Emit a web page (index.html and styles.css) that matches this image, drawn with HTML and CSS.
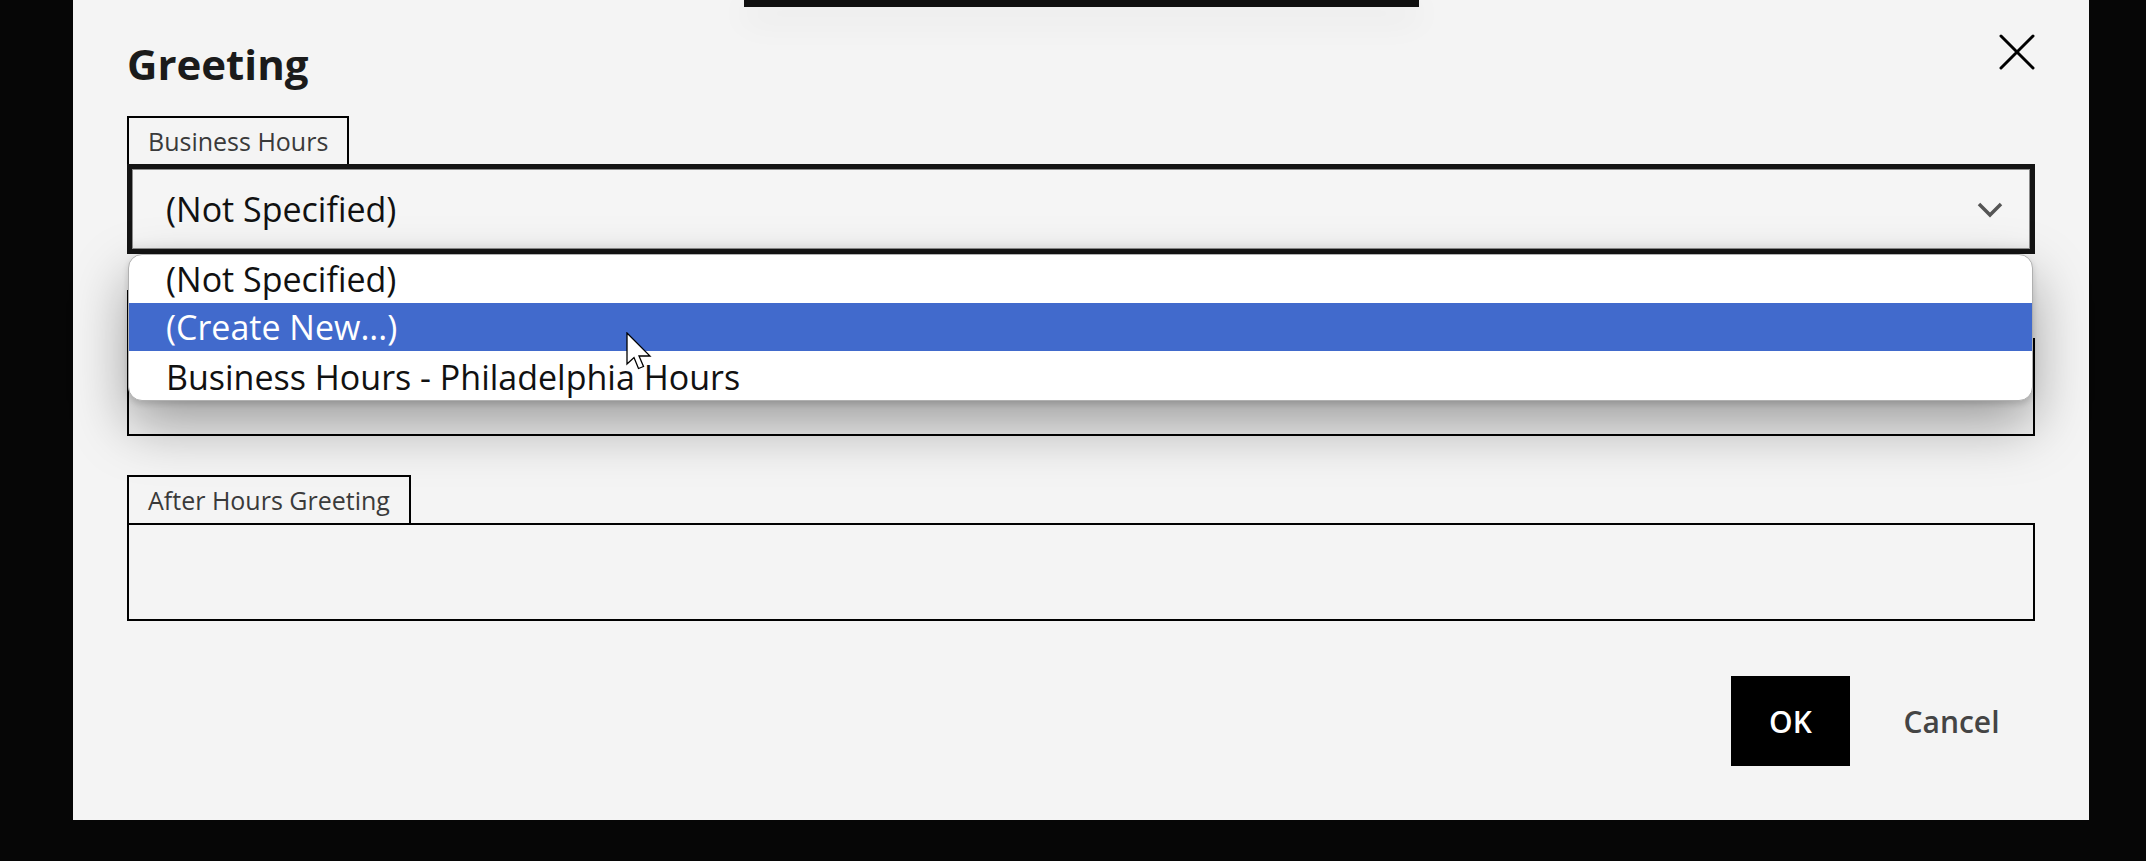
FILE: index.html
```html
<!DOCTYPE html>
<html lang="en">
<head>
<meta charset="utf-8">
<title>Greeting</title>
<link rel="stylesheet" href="styles.css">
</head>
<body>
<div class="screen">
  <div class="topbar"></div>
  <div class="dialog">
    <div class="dialog-header">
      <h1 class="title">Greeting</h1>
      <button class="close" aria-label="Close">
        <svg width="36" height="36" viewBox="0 0 36 36"><path d="M2 2 L34 34 M34 2 L2 34" stroke="#000" stroke-width="3" stroke-linecap="round" fill="none"/></svg>
      </button>
    </div>

    <div class="field">
      <div class="tab">Business Hours</div>
      <div class="select-wrap">
        <div class="select">
          <span>(Not Specified)</span>
          <svg class="chevron" width="26" height="17" viewBox="0 0 26 17"><path d="M2 3 L13 14 L24 3" stroke="#555" stroke-width="3.5" fill="none"/></svg>
        </div>
        <ul class="listbox">
          <li class="option">(Not Specified)</li>
          <li class="option active">(Create New...)</li>
          <li class="option option-last">Business Hours - Philadelphia Hours</li>
        </ul>
      </div>
    </div>

    <div class="field field-second">
      <div class="tab tab-hidden" aria-hidden="true"></div>
      <div class="box"></div>
    </div>

    <div class="field field-third">
      <div class="tab">After Hours Greeting</div>
      <div class="box"></div>
    </div>

    <div class="actions">
      <button class="btn btn-primary">OK</button>
      <button class="btn btn-secondary">Cancel</button>
    </div>
  </div>
  <svg class="cursor" width="26" height="38" viewBox="0 0 26 38"><path d="M1 1 L1 32 L8 25.5 L12.5 36.5 L17.5 34.5 L13 24 L24 24 Z" fill="#fff" stroke="#000" stroke-width="1.3" stroke-linejoin="miter"/></svg>
</div>
</body>
</html>
```

FILE: styles.css
```css
html, body {
  margin: 0;
  padding: 0;
}

body {
  width: 2146px;
  height: 861px;
  overflow: hidden;
  background: #060606;
  font-family: "Open Sans", "Noto Sans", sans-serif;
}

.screen {
  position: relative;
  height: 861px;
  padding-left: 73px;
  box-sizing: border-box;
}

.topbar {
  position: absolute;
  left: 744px;
  top: 0;
  width: 675px;
  height: 7px;
  background: #111;
  box-shadow: 0 10px 34px rgba(0, 0, 0, 0.12);
  z-index: 3;
}

.dialog {
  width: 2016px;
  height: 820px;
  background: #f4f4f4;
  padding: 0 54px;
  box-sizing: border-box;
  display: flex;
  flex-direction: column;
}

.dialog-header {
  display: flex;
  justify-content: space-between;
  align-items: flex-start;
  height: 116px;
  padding-top: 34px;
  box-sizing: border-box;
}

.title {
  margin: 5px 0 0;
  font-size: 42px;
  line-height: 50px;
  font-weight: 700;
  color: #1b1b1b;
}

.close {
  width: 36px;
  height: 36px;
  padding: 0;
  border: 0;
  background: none;
}

.close svg {
  display: block;
}

.field {
  display: flex;
  flex-direction: column;
  align-items: flex-start;
}

.field-second {
  margin-top: 36px;
}

.field-third {
  margin-top: 39px;
}

.tab {
  height: 48px;
  box-sizing: border-box;
  border: 2px solid #000;
  border-bottom: 0;
  padding: 0 19px;
  display: flex;
  align-items: center;
  font-size: 25px;
  color: #3a3a3a;
  background: #f4f4f4;
}

.tab-hidden {
  width: 330px;
}

.select-wrap {
  position: relative;
  align-self: stretch;
}

.select {
  height: 90px;
  box-sizing: border-box;
  border: 5px solid #141414;
  box-shadow: inset 0 0 0 1px #8c8c8c, inset 0 -12px 12px -10px rgba(0, 0, 0, 0.08);
  background: #f5f5f5;
  display: flex;
  align-items: center;
  justify-content: space-between;
  padding: 0 27px 0 34px;
  font-size: 34px;
  color: #111;
}

.chevron {
  display: block;
}

.listbox {
  position: absolute;
  top: 90px;
  left: 1px;
  right: 2px;
  margin: 0;
  padding: 0;
  list-style: none;
  background: #fff;
  border: 1px solid #b0b0b0;
  border-radius: 14px;
  overflow: hidden;
  z-index: 2;
  box-shadow: 0 24px 56px rgba(0, 0, 0, 0.36), 0 3px 6px rgba(0, 0, 0, 0.14);
}

.option {
  height: 48px;
  display: flex;
  align-items: center;
  padding-left: 37px;
  font-size: 34px;
  color: #111;
}

.option-last {
  height: 49px;
  padding-top: 2px;
  box-sizing: border-box;
}

.option.active {
  background: #416acc;
  color: #fff;
}

.box {
  align-self: stretch;
  height: 98px;
  box-sizing: border-box;
  border: 2px solid #000;
  background: #f4f4f4;
}

.actions {
  margin-top: 55px;
  display: flex;
  justify-content: flex-end;
  gap: 18px;
}

.btn {
  height: 90px;
  border: 0;
  padding: 0;
  font-family: inherit;
  font-size: 30px;
  font-weight: 600;
}

.btn-primary {
  width: 119px;
  background: #000;
  color: #fff;
}

.btn-secondary {
  width: 167px;
  background: transparent;
  color: #444;
}

.cursor {
  position: absolute;
  left: 626px;
  top: 332px;
  z-index: 10;
}
```
